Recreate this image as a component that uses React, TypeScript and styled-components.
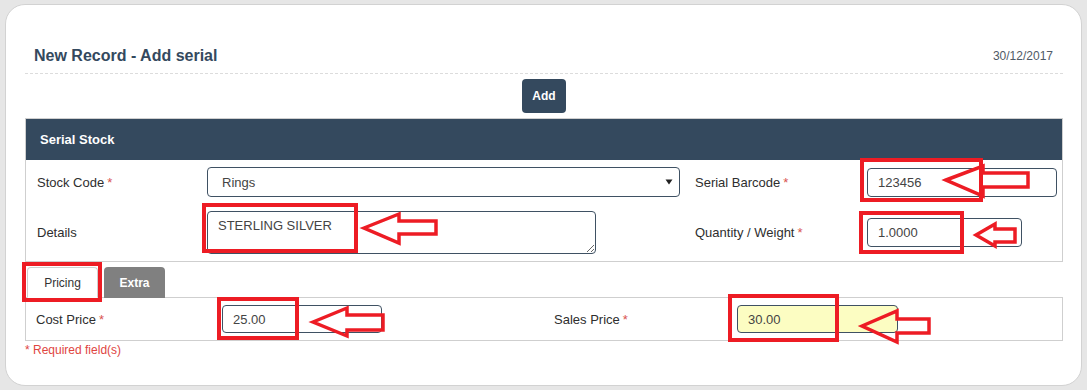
import React from "react";
import styled, { createGlobalStyle } from "styled-components";

const Global = createGlobalStyle`
  html, body { margin: 0; padding: 0; }
  body {
    background: #e6e6e6;
    font-family: "Liberation Sans", Arial, sans-serif;
    width: 1087px;
    height: 390px;
    overflow: hidden;
    position: relative;
  }
`;

const Card = styled.div`
  box-sizing: border-box;
  margin: 4px 0 0 5px;
  width: 1077px;
  height: 382px;
  background: #fff;
  border: 1px solid #d2d2d2;
  border-radius: 20px;
  padding: 0 18px 0 19px;
`;

const TitleBar = styled.div`
  display: flex;
  align-items: center;
  justify-content: space-between;
  padding: 41px 10px 7px 9px;
  border-bottom: 1px dashed #dcdcdc;
`;

const Title = styled.h1`
  margin: 0;
  font-size: 16px;
  line-height: 20px;
  font-weight: bold;
  color: #34495e;
`;

const DateText = styled.span`
  font-size: 12px;
  line-height: 20px;
  color: #4f5a66;
`;

const Actions = styled.div`
  display: flex;
  justify-content: center;
  padding: 5px 0 5px;
`;

const DarkButton = styled.button`
  width: 44px;
  height: 34px;
  border: none;
  border-radius: 4px;
  background: #34495e;
  color: #fff;
  font-family: "Liberation Sans", Arial, sans-serif;
  font-weight: bold;
  font-size: 12px;
  padding: 0;
`;

const Panel = styled.div`
  border: 1px solid #cfcfcf;
`;

const PanelHeader = styled.div`
  height: 41px;
  background: #34495e;
  color: #fff;
  font-weight: bold;
  font-size: 13px;
  display: flex;
  align-items: center;
  padding-left: 14px;
`;

const FormGrid = styled.div<{ $cols: string; $pad: number; $gap?: number }>`
  display: grid;
  grid-template-columns: ${(p) => p.$cols};
  align-items: center;
  row-gap: ${(p) => p.$gap ?? 0}px;
  padding: ${(p) => p.$pad}px 0;
`;

const Label = styled.label<{ $pl: number }>`
  padding-left: ${(p) => p.$pl}px;
  font-size: 13px;
  color: #2e2e2e;
`;

const Req = styled.span`
  color: #d9534f;
  margin-left: 3px;
`;

const Field = styled.input<{ $w: number; $h: number; $bg?: string }>`
  box-sizing: border-box;
  width: ${(p) => p.$w}px;
  height: ${(p) => p.$h}px;
  border: 1px solid #3f5163;
  border-radius: 4px;
  background: ${(p) => p.$bg ?? "#fff"};
  padding: 0 10px;
  font-family: "Liberation Sans", Arial, sans-serif;
  font-size: 13px;
  color: #444;
  outline: none;
`;

const SelectBox = styled.div`
  box-sizing: border-box;
  width: 473px;
  height: 30px;
  border: 1px solid #3f5163;
  border-radius: 4px;
  display: flex;
  align-items: center;
  justify-content: space-between;
  padding: 0 6px 0 14px;
  font-size: 13px;
  color: #444;
`;

const Area = styled.textarea`
  box-sizing: border-box;
  width: 389px;
  height: 43px;
  border: 1px solid #3f5163;
  border-radius: 4px;
  padding: 6px 10px;
  font-family: "Liberation Sans", Arial, sans-serif;
  font-size: 13px;
  color: #444;
  outline: none;
  display: block;
`;

const Tabs = styled.div`
  display: flex;
  gap: 6px;
  margin: 5px 0 0 2px;
`;

const Tab = styled.div<{ $active?: boolean }>`
  box-sizing: border-box;
  height: 31px;
  margin-bottom: -1px;
  border-radius: 4px 4px 0 0;
  display: flex;
  align-items: center;
  justify-content: center;
  font-size: 12px;
  ${(p) =>
    p.$active
      ? `width: 71px; background:#fff; color:#333; border:1px solid #cfcfcf; border-bottom-color:#fff; position: relative; z-index: 1;`
      : `width: 61px; background:#808080; color:#fff; font-weight:bold;`}
`;

const TabBody = styled.div`
  border: 1px solid #cfcfcf;
`;

const Required = styled.div`
  font-size: 12px;
  color: #e0453f;
  margin-top: 2px;
  line-height: 14px;
`;

const Overlay = styled.svg`
  position: absolute;
  left: 0;
  top: 0;
  pointer-events: none;
`;

const boxes = [
  [862, 160, 119, 40],
  [861, 213, 101, 39],
  [204, 205, 152, 46],
  [24, 264, 76, 36],
  [219, 299, 78, 39],
  [730, 296, 107, 44],
];

const arrows = [
  [946, 180, 983, 166, 196, 173, 187, 1028],
  [976, 235, 995, 224, 246, 229, 242, 1015],
  [364, 228, 399, 214, 243, 221, 234, 436],
  [313, 322, 347, 308, 336, 315, 330, 383],
  [862, 326, 897, 311, 342, 319, 333, 929],
];

export default function App() {
  return (
    <>
      <Global />
      <Card>
        <TitleBar>
          <Title>New Record - Add serial</Title>
          <DateText>30/12/2017</DateText>
        </TitleBar>
        <Actions>
          <DarkButton>Add</DarkButton>
        </Actions>
        <Panel>
          <PanelHeader>Serial Stock</PanelHeader>
          <FormGrid $cols="181px 473px 187px 1fr" $pad={7} $gap={14}>
            <Label $pl={11}>
              Stock Code<Req>*</Req>
            </Label>
            <SelectBox>
              <span>Rings</span>
              <svg width="8" height="6" viewBox="0 0 8 6">
                <path d="M0.5 0.5 L7.5 0.5 L4 5.5 Z" fill="#222" />
              </svg>
            </SelectBox>
            <Label $pl={15}>
              Serial Barcode<Req>*</Req>
            </Label>
            <Field $w={190} $h={29} defaultValue="123456" />
            <Label $pl={11}>Details</Label>
            <Area defaultValue="STERLING SILVER" />
            <Label $pl={15}>
              Quantity / Weight<Req>*</Req>
            </Label>
            <Field $w={155} $h={29} defaultValue="1.0000" />
          </FormGrid>
        </Panel>
        <Tabs>
          <Tab $active>Pricing</Tab>
          <Tab>Extra</Tab>
        </Tabs>
        <TabBody>
          <FormGrid $cols="196px 322px 193px 1fr" $pad={7}>
            <Label $pl={10}>
              Cost Price<Req>*</Req>
            </Label>
            <Field $w={160} $h={28} defaultValue="25.00" />
            <Label $pl={10}>
              Sales Price<Req>*</Req>
            </Label>
            <Field $w={161} $h={28} $bg="#fcfdc2" defaultValue="30.00" />
          </FormGrid>
        </TabBody>
        <Required>* Required field(s)</Required>
      </Card>
      <Overlay width="1087" height="390" viewBox="0 0 1087 390">
        {boxes.map(([x, y, w, h], i) => (
          <rect key={i} x={x} y={y} width={w} height={h} fill="none" stroke="#ed1c24" strokeWidth={4} />
        ))}
        {arrows.map(([tx, ty, hx, hy1, hy2, sy1, sy2, ex], i) => (
          <polygon
            key={i}
            points={`${tx},${ty} ${hx},${hy1} ${hx},${sy1} ${ex},${sy1} ${ex},${sy2} ${hx},${sy2} ${hx},${hy2}`}
            fill="none"
            stroke="#ed1c24"
            strokeWidth={3.5}
          />
        ))}
      </Overlay>
    </>
  );
}
